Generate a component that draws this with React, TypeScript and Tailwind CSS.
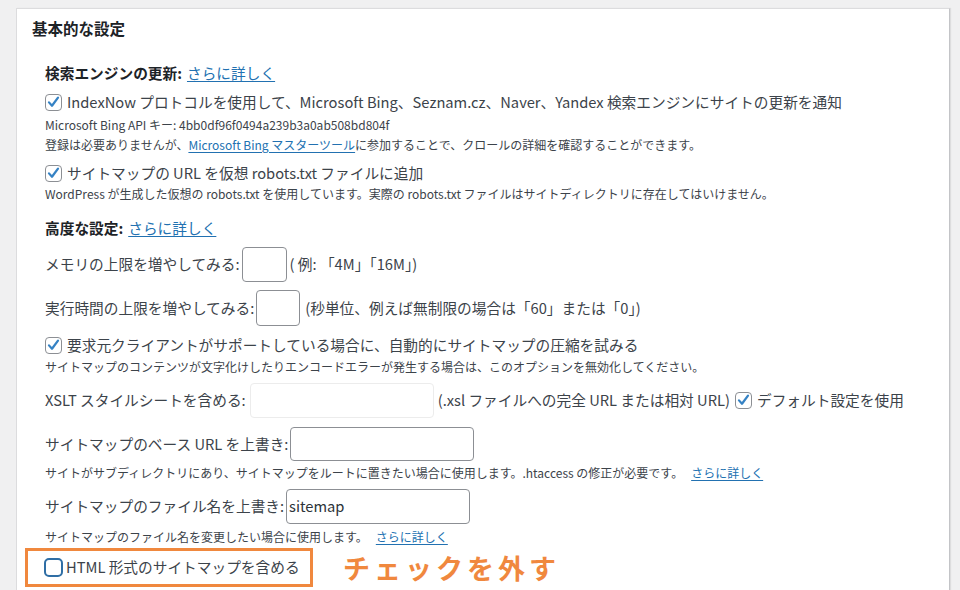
import React from "react";

const font = { fontFamily: '"Noto Sans CJK JP", "Noto Sans", sans-serif' };

function Check({ checked = true }: { checked?: boolean }) {
  return (
    <span className="inline-flex w-[17px] h-[17px] shrink-0 items-center justify-center rounded-[4px] border border-[#8c8f94] bg-white">
      {checked && (
        <svg width="16" height="16" viewBox="0 0 20 20">
          <path d="M4 10.5 L8 15 L16 4.2" fill="none" stroke="#3582c4" strokeWidth="3" strokeLinecap="round" strokeLinejoin="round" />
        </svg>
      )}
    </span>
  );
}

function Link({ children }: { children: React.ReactNode }) {
  return <span className="text-[#2271b1] underline underline-offset-2">{children}</span>;
}

export default function App() {
  return (
    <div className="w-[960px] h-[590px] overflow-hidden bg-[#f0f0f1] pt-[8px] pl-[16px]" style={font}>
      <div className="w-[934px] h-[620px] bg-white border border-[#dcdcde] border-r-[#c3c4c7] shadow-[1px_0_1px_rgba(0,0,0,0.08)] text-[#3c434a]">
        <div className="h-[40px] flex items-center pl-[15px] text-[15.5px] font-bold text-[#1d2327]">基本的な設定</div>
        <div className="pl-[28px] flex flex-col text-[14.7px]">
          <div className="mt-[12px] h-[24px] flex items-center">
            <span className="font-bold text-[#1d2327]">検索エンジンの更新:</span>
            <span className="ml-[5px]"><Link>さらに詳しく</Link></span>
          </div>
          <div className="mt-[6px] h-[22px] flex items-center gap-[5px]">
            <Check />
            <span>IndexNow プロトコルを使用して、Microsoft Bing、Seznam.cz、Naver、Yandex 検索エンジンにサイトの更新を通知</span>
          </div>
          <div className="mt-[3px] h-[18px] flex items-center text-[12px]">Microsoft Bing API キー: 4bb0df96f0494a239b3a0ab508bd804f</div>
          <div className="mt-[2px] h-[18px] flex items-center text-[12px]">
            <span>登録は必要ありませんが、</span><Link>Microsoft Bing マスターツール</Link><span>に参加することで、クロールの詳細を確認することができます。</span>
          </div>
          <div className="mt-[8px] h-[22px] flex items-center gap-[5px]">
            <Check />
            <span>サイトマップの URL を仮想 robots.txt ファイルに追加</span>
          </div>
          <div className="mt-[1px] h-[18px] flex items-center text-[12px]">WordPress が生成した仮想の robots.txt を使用しています。実際の robots.txt ファイルはサイトディレクトリに存在してはいけません。</div>
          <div className="mt-[13px] h-[24px] flex items-center">
            <span className="font-bold text-[#1d2327]">高度な設定:</span>
            <span className="ml-[5px]"><Link>さらに詳しく</Link></span>
          </div>
          <div className="mt-[7px] h-[35px] flex items-center">
            <span>メモリの上限を増やしてみる:</span>
            <span className="ml-[2px] w-[45px] h-[35px] rounded-[4px] border border-[#8c8f94] bg-white" />
            <span className="ml-[3px]">( 例: 「4M」「16M」)</span>
          </div>
          <div className="mt-[8px] h-[36px] flex items-center">
            <span>実行時間の上限を増やしてみる:</span>
            <span className="ml-[2px] w-[44px] h-[36px] rounded-[4px] border border-[#8c8f94] bg-white" />
            <span className="ml-[5px]">(秒単位、例えば無制限の場合は「60」または「0」)</span>
          </div>
          <div className="mt-[8px] h-[22px] flex items-center gap-[5px]">
            <Check />
            <span>要求元クライアントがサポートしている場合に、自動的にサイトマップの圧縮を試みる</span>
          </div>
          <div className="mt-[2px] h-[18px] flex items-center text-[12px]">サイトマップのコンテンツが文字化けしたりエンコードエラーが発生する場合は、このオプションを無効化してください。</div>
          <div className="mt-[7px] h-[35px] flex items-center">
            <span>XSLT スタイルシートを含める:</span>
            <span className="ml-[4px] w-[184px] h-[35px] rounded-[4px] border border-[#ececec] bg-white" />
            <span className="ml-[4px]">(.xsl ファイルへの完全 URL または相対 URL)</span>
            <span className="ml-[5px] flex items-center gap-[5px]"><Check /><span>デフォルト設定を使用</span></span>
          </div>
          <div className="mt-[9px] h-[34px] flex items-center">
            <span>サイトマップのベース URL を上書き:</span>
            <span className="ml-[2px] w-[184px] h-[34px] rounded-[4px] border border-[#8c8f94] bg-white" />
          </div>
          <div className="mt-[3px] h-[18px] flex items-center text-[12px]">
            <span>サイトがサブディレクトリにあり、サイトマップをルートに置きたい場合に使用します。.htaccess の修正が必要です。</span>
            <span className="ml-[8px]"><Link>さらに詳しく</Link></span>
          </div>
          <div className="mt-[7px] h-[35px] flex items-center">
            <span>サイトマップのファイル名を上書き:</span>
            <span className="ml-[2px] w-[184px] h-[35px] rounded-[4px] border border-[#8c8f94] bg-white flex items-center pl-[2px] text-[#2c3338]">sitemap</span>
          </div>
          <div className="mt-[4px] h-[18px] flex items-center text-[12px]">
            <span>サイトマップのファイル名を変更したい場合に使用します。</span>
            <span className="ml-[8px]"><Link>さらに詳しく</Link></span>
          </div>
          <div className="mt-[2px] -ml-[20px] flex items-center">
            <div className="w-[288px] h-[39px] border-[3px] border-[#f0883e] flex items-center pl-[16px] gap-[3px]">
              <span className="w-[19px] h-[19px] rounded-[5px] border-[2px] border-[#2f6ea5] bg-white" />
              <span>HTML 形式のサイトマップを含める</span>
            </div>
            <span className="ml-[30px] text-[27px] font-bold text-[#f0883e] tracking-[4px] leading-none">チェックを外す</span>
          </div>
        </div>
      </div>
    </div>
  );
}
